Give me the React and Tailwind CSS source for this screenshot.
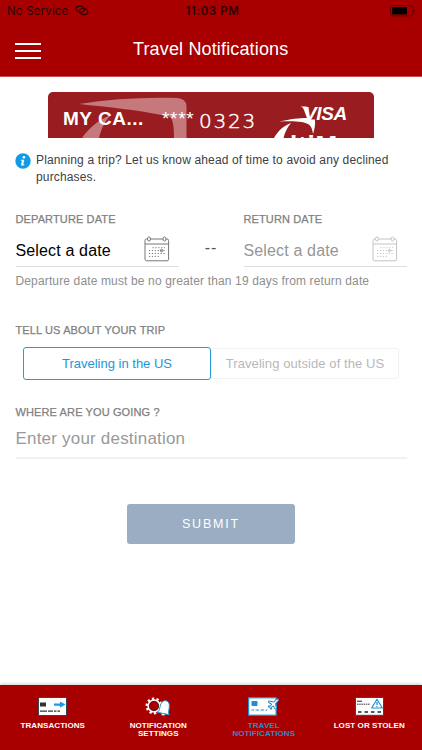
import React, { useState } from 'react';
import { Plane } from 'lucide-react';

const CalendarIcon = ({ className }) => (
  <svg width="26" height="26" viewBox="0 0 26 26" fill="none" stroke="currentColor" className={className}>
    <rect x="1" y="3" width="23.6" height="21.8" rx="1.6" />
    <path d="M1 8h23.6" />
    <ellipse cx="5" cy="3" rx="1.5" ry="2.1" fill="white" />
    <ellipse cx="20.5" cy="3" rx="1.5" ry="2.1" fill="white" />
    <path d="M8.5 11.7h12.5M5 14.6h16M5 17.5h16M5 20.4h11" strokeDasharray="1.2 1.7" strokeWidth="1" />
    <circle cx="17.6" cy="14.6" r="1.3" />
  </svg>
);

const TransactionsIcon = () => (
  <svg width="29" height="19" viewBox="0 0 29 19">
    <rect x="0.5" y="0.5" width="28" height="18" fill="white" stroke="#3b4450" />
    <rect x="2" y="5.5" width="6" height="4" fill="#333" />
    <path d="M16 6.4h6V4.4l5.5 3.2-5.5 3.2V8.8h-6z" fill="#1e9ade" />
    <path d="M2 14.2h7M10 14.2h5M16 14.2h2.5M19.5 14.2h2.5" stroke="#333" strokeWidth="1.2" />
  </svg>
);

const SettingsIcon = () => (
  <svg width="27" height="20" viewBox="0 0 27 20">
    <circle cx="9" cy="9" r="7.4" fill="none" stroke="white" strokeWidth="2.2" strokeDasharray="2.3 2.35" />
    <circle cx="9" cy="9" r="5.8" fill="#a80000" stroke="white" strokeWidth="1.7" />
    <circle cx="9" cy="9" r="4.7" fill="none" stroke="#222" strokeWidth="0.7" />
    <g transform="rotate(12 19 11)" fill="white" stroke="#2492d2" strokeWidth="0.9">
      <circle cx="19.5" cy="17" r="1.8" />
      <path d="M13.5 16.5c1.7-1.6 1.2-3.5 1.4-6.5.2-4.3 1.8-6.5 4.6-6.5s4.4 2.2 4.6 6.5c.2 3-.3 4.9 1.4 6.5z" />
    </g>
  </svg>
);

const TravelIcon = () => (
  <svg width="32" height="19" viewBox="0 0 32 19">
    <rect x="0.6" y="0.8" width="27.5" height="17.4" fill="white" stroke="#2492d2" strokeWidth="1.2" />
    <rect x="3.5" y="4" width="6" height="5" rx="0.8" fill="#1e8fd0" />
    <path d="M3.5 13h2.5M7.5 13h3.5M12.5 13h3.5M17.5 13h2" stroke="#2492d2" strokeWidth="1.2" />
    <Plane x="18.5" y="0.5" width="13.5" height="13.5" fill="white" stroke="#2492d2" strokeWidth={1.8} />
  </svg>
);

const LostIcon = () => (
  <svg width="29" height="19" viewBox="0 0 29 19">
    <rect x="0.5" y="0.5" width="28" height="17.8" fill="white" stroke="#3b4450" />
    <path d="M2 4.2h5" stroke="#222" />
    <path d="M2 7.2h13" stroke="#333" strokeDasharray="1.5 .7" />
    <path d="M3 15h24" stroke="#222" strokeWidth="1.6" strokeDasharray="3.5 3" />
    <path d="M22 2.2 27.3 11H16.7z" fill="white" stroke="#2492d2" strokeWidth="1.2" strokeLinejoin="round" />
    <path d="M22 5v3M22 8.9v1" stroke="#2492d2" strokeWidth="1.3" />
  </svg>
);

const tabs = [
  { label: ['TRANSACTIONS'], icon: <TransactionsIcon /> },
  { label: ['NOTIFICATION', 'SETTINGS'], icon: <SettingsIcon /> },
  { label: ['TRAVEL', 'NOTIFICATIONS'], icon: <TravelIcon />, active: true },
  { label: ['LOST OR STOLEN'], icon: <LostIcon /> },
];

const StatusBar = () => (
  <div className="flex h-[23px] items-center justify-between pl-[7px] pr-[6px] font-[Inter,sans-serif] text-[#300000]">
    <div className="flex w-[142px] items-center gap-[7px]">
      <span className="text-[11.5px] tracking-[0.15px]">No Service</span>
      <svg className="-mt-[2px]" width="14" height="11" viewBox="0 0 14 11" fill="none" stroke="currentColor" strokeWidth="1.2">
        <ellipse cx="5.3" cy="4.2" rx="4.3" ry="3" transform="rotate(10 5.3 4.2)" />
        <ellipse cx="8.6" cy="6.6" rx="4.3" ry="3" transform="rotate(10 8.6 6.6)" />
      </svg>
    </div>
    <span className="text-[11.5px] font-semibold tracking-[0.6px]">11:03 PM</span>
    <div className="flex w-[140px] justify-end">
      <svg className="-mt-[2px]" width="26" height="12" viewBox="0 0 26 12">
        <rect x="0.6" y="0.6" width="22.5" height="10.3" rx="2.6" fill="none" stroke="#650000" />
        <rect x="2" y="2" width="15" height="7.5" rx="1" fill="black" />
        <path d="M24.3 4v3.5c1.3-.5 1.3-3 0-3.5z" fill="#650000" />
      </svg>
    </div>
  </div>
);

const BankCard = () => (
  <div className="relative mx-auto h-[46px] w-[326px] overflow-hidden rounded-t-[5px] bg-[#981c20] text-white">
    <svg className="absolute inset-0" width="326" height="46" viewBox="0 0 326 46">
      <g fill="#c5797c">
        <path d="M31 12C62 7 95 5 129 6q9 .5 9.5 8V46H126c0-8-.5-14-2-18-.8-2.5-2-3.300-5-4C90 18 60 15 31 12z" />
        <path d="M34 46c7-10 16-18 29-23-6 6-10 14-12 23z" />
      </g>
      <g fill="white">
        <path d="M231 29.5c12-2.500 20-3.500 28-3.500l-3-8c-.7-2-1.500-3-3.500-3.500h6l4 13h4.500c.5 5-.5 10-2 14.500-.5-4-1.500-7-3.500-9-5-4-16-4-30.500-3.500z" />
        <path d="M226 46c4-7 9-12 17-15-4 5-6 9-7.500 15z" />
      </g>
    </svg>
    <div className="relative flex h-full items-start">
      <span className="ml-[15px] mt-[16px] w-[99px] text-[19px] font-bold leading-[22px] tracking-[0.5px]">MY CA...</span>
      <span className="mt-[16px] w-[37px] text-[19px] leading-[22px] tracking-[0.7px]">****</span>
      <span className="mt-[18px] w-[103px] font-['DejaVu_Sans',sans-serif] text-[20px] font-extralight leading-[22px] tracking-[1.8px] [-webkit-text-stroke:0.5px_white]">0323</span>
      <div className="flex flex-col">
        <span className="ml-[2px] mt-[12px] text-[19px] font-bold italic leading-[20px] tracking-[-0.4px]">VISA</span>
        <span className="-ml-[12px] mt-[10px] text-[26px] font-bold leading-[22px] tracking-[0.8px]">ltiM</span>
      </div>
    </div>
  </div>
);

const FieldLabel = ({ children }) => (
  <div className="text-[11px] leading-[14px] tracking-[0.12px] text-[#808080] [-webkit-text-stroke:0.25px_#808080]">
    {children}
  </div>
);

const DateField = ({ label, disabled }) => (
  <div className="w-[163px]">
    <FieldLabel>{label}</FieldLabel>
    <button className="mt-[9px] flex h-[32px] w-full items-center justify-between border-b border-[#dedede] pr-[9px] text-left">
      <span className={disabled ? 'text-[16px] tracking-[0.15px] text-[#969696]' : 'text-[16px] tracking-[0.15px] text-black'}>
        Select a date
      </span>
      <CalendarIcon className={disabled ? '-mt-[4px] text-[#c4c4c4]' : '-mt-[4px] text-[#777]'} />
    </button>
  </div>
);

const App = () => {
  const [region, setRegion] = useState('in');

  const regionClass = (id) =>
    region === id
      ? 'h-[33px] w-[188px] rounded-[3px] border border-[#2a9bd8] text-[#1e96d6]'
      : 'h-[31px] w-[188px] rounded-[3px] border border-[#f1f1f1] tracking-[0.08px] text-[#b8b8bb]';

  return (
    <div className="flex h-[750px] w-[422px] flex-col bg-white font-['Liberation_Sans',Arial,sans-serif]">
      <header className="h-[77px] border-b border-[#c65050] bg-[#a80000]">
        <StatusBar />
        <div className="flex h-[53px] items-center">
          <button className="ml-[15px] mt-[3px] flex w-[26px] flex-col gap-[5px]">
            <span className="h-[2px] w-full bg-white" />
            <span className="h-[2px] w-full bg-white" />
            <span className="h-[2px] w-full bg-white" />
          </button>
          <h1 className="ml-[92px] text-[18px] tracking-[0.15px] text-white">Travel Notifications</h1>
        </div>
      </header>

      <main className="flex-1 pt-[15px]">
        <BankCard />

        <div className="mt-[14px] flex pl-[15px]">
          <svg className="mt-px" width="16" height="16" viewBox="0 0 16 16">
            <circle cx="8" cy="8" r="7.7" fill="#109be6" />
            <circle cx="8.9" cy="4.3" r="1.3" fill="white" />
            <path d="M6 6.8h3.3l-1 4.3c0 .5.4.5 1.2 0l-.3 1c-1.5 1-3.5.9-3-1l.8-3.4H5.8z" fill="white" />
          </svg>
          <p className="ml-[5px] w-[370px] text-[12px] leading-[17px] tracking-[0.15px] text-[#404045]">
            Planning a trip? Let us know ahead of time to avoid any declined purchases.
          </p>
        </div>

        <div className="mt-[26px] flex pl-[15.5px]">
          <DateField label="DEPARTURE DATE" />
          <div className="flex w-[65px] justify-center pt-[24px] text-[16px] tracking-[1px] text-[#555]">--</div>
          <DateField label="RETURN DATE" disabled />
        </div>
        <p className="ml-[15.5px] mt-[6px] text-[12px] leading-[16px] tracking-[0.14px] text-[#8e8e8e]">
          Departure date must be no greater than 19 days from return date
        </p>

        <div className="ml-[15.5px] mt-[34px]">
          <FieldLabel>TELL US ABOUT YOUR TRIP</FieldLabel>
        </div>
        <div className="ml-[23px] mt-[10px] flex h-[33px] items-center text-[13px]">
          <button className={regionClass('in')} onClick={() => setRegion('in')}>Traveling in the US</button>
          <button className={regionClass('out')} onClick={() => setRegion('out')}>Traveling outside of the US</button>
        </div>

        <div className="ml-[15.5px] mt-[25px]">
          <FieldLabel>WHERE ARE YOU GOING ?</FieldLabel>
        </div>
        <div className="mx-[15.5px] mt-[9px] flex h-[31px] items-start border-b-2 border-[#f1f1f1] text-[17px] leading-[22px] tracking-[0.2px] text-[#999]">
          Enter your destination
        </div>

        <button className="mx-auto mt-[45px] block h-[40px] w-[168px] rounded-[3px] bg-[#9aadc3] text-[12.5px] tracking-[1.8px] text-white">
          SUBMIT
        </button>
      </main>

      <nav className="flex h-[65px] bg-[#a80000] shadow-[0_-1px_3px_rgba(0,0,0,0.2)]">
        {tabs.map((tab) => (
          <button
            key={tab.label[0]}
            className={`flex flex-1 flex-col items-center pt-[12px] text-[8px] font-bold leading-[8.5px] tracking-[0.08px] ${tab.active ? 'text-[#3188c6]' : 'text-white'}`}
          >
            <span className="flex h-[20px] items-start">{tab.icon}</span>
            <span className="mt-[4.5px]">
              {tab.label.map((line) => (
                <span key={line} className="block">{line}</span>
              ))}
            </span>
          </button>
        ))}
      </nav>
    </div>
  );
};

export default App;
